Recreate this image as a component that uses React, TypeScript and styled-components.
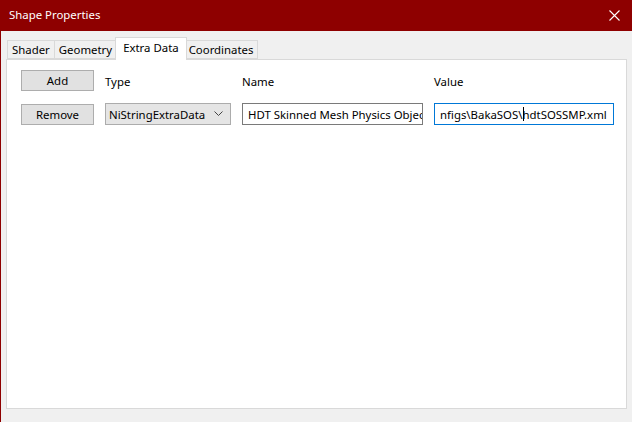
import React from 'react';
import styled, { createGlobalStyle } from 'styled-components';

const GlobalStyle = createGlobalStyle`
  html, body {
    margin: 0;
    padding: 0;
    background: #f0f0f0;
  }
  body {
    font-family: 'Noto Sans', 'Segoe UI', 'Liberation Sans', sans-serif;
    font-size: 11.4px;
    color: #000;
  }
`;

const StWindow = styled.div`
  width: 632px;
  height: 422px;
  box-sizing: border-box;
  border-left: 1px solid #8e0000;
  display: flex;
  flex-direction: column;
  background: #f0f0f0;
  overflow: hidden;
`;

const StTitleBar = styled.div`
  height: 31px;
  flex-shrink: 0;
  background: #8e0000;
  color: #fff;
  display: flex;
  align-items: center;
  justify-content: space-between;
  padding: 0 8px 0 8px;
`;

const StTitle = styled.span`
  line-height: 1;
  margin-top: -1px;
`;

const StCloseButton = styled.div`
  width: 16px;
  height: 16px;
  display: flex;
  align-items: center;
  justify-content: center;
  margin-right: 2px;
`;

const StBody = styled.div`
  flex: 1;
  display: flex;
  flex-direction: column;
  padding: 6px 5px 13px 5px;
`;

const StTabStrip = styled.div`
  display: flex;
  align-items: flex-end;
  height: 22px;
  padding-left: 2px;
  position: relative;
  z-index: 1;
`;

type TabProps = {
  $active?: boolean;
};

const StTab = styled.div<TabProps>`
  box-sizing: border-box;
  height: ${(p) => (p.$active ? '23px' : '19px')};
  padding: ${(p) => (p.$active ? '0 7px 3px 7px' : '0 4px')};
  margin: ${(p) => (p.$active ? '0 -2px -1px -2px' : '0 0 0 -1px')};
  background: ${(p) => (p.$active ? '#fff' : '#f0f0f0')};
  border: 1px solid #d9d9d9;
  border-bottom: ${(p) => (p.$active ? 'none' : '1px solid #d9d9d9')};
  display: flex;
  align-items: center;
  white-space: nowrap;
  position: relative;
  z-index: ${(p) => (p.$active ? 2 : 1)};
`;

const StTabPanel = styled.div`
  flex: 1;
  background: #fff;
  border: 1px solid #d9d9d9;
  padding: 10px 0 0 14px;
`;

const StGrid = styled.div`
  display: grid;
  grid-template-columns: 73px 126px 181px 180px;
  grid-template-rows: 21px 22px;
  column-gap: 11px;
  row-gap: 12px;
  align-items: center;
`;

const StButton = styled.div`
  box-sizing: border-box;
  height: 21px;
  background: #e1e1e1;
  border: 1px solid #adadad;
  display: flex;
  align-items: center;
  justify-content: center;
`;

const StLabel = styled.div`
  padding-top: 1px;
`;

const StCombo = styled.div`
  box-sizing: border-box;
  height: 22px;
  background: #e5e5e5;
  border: 1px solid #acacac;
  display: flex;
  align-items: center;
  justify-content: space-between;
  padding: 0 7px 0 3px;
`;

type FieldProps = {
  $focused?: boolean;
};

const StTextField = styled.div<FieldProps>`
  box-sizing: border-box;
  height: 22px;
  background: #fff;
  border: 1px solid ${(p) => (p.$focused ? '#0078d7' : '#7a7a7a')};
  display: flex;
  align-items: center;
  padding: 0 0 0 5px;
  overflow: hidden;
  white-space: nowrap;
`;

const StCaret = styled.span`
  display: inline-block;
  width: 1px;
  height: 14px;
  background: #000;
  margin: 0 -1px 0 0;
`;

const tabs = ['Shader', 'Geometry', 'Extra Data', 'Coordinates'];

const App = () => {
  return (
    <>
      <GlobalStyle />
      <StWindow>
        <StTitleBar>
          <StTitle>Shape Properties</StTitle>
          <StCloseButton>
            <svg width="11" height="11" viewBox="0 0 11 11">
              <path d="M0.5 0.5 L10.5 10.5 M10.5 0.5 L0.5 10.5" stroke="#fff" strokeWidth="1.1" />
            </svg>
          </StCloseButton>
        </StTitleBar>
        <StBody>
          <StTabStrip>
            {tabs.map((tab) => (
              <StTab key={tab} $active={tab === 'Extra Data'}>
                {tab}
              </StTab>
            ))}
          </StTabStrip>
          <StTabPanel>
            <StGrid>
              <StButton>Add</StButton>
              <StLabel>Type</StLabel>
              <StLabel>Name</StLabel>
              <StLabel>Value</StLabel>

              <StButton>Remove</StButton>
              <StCombo>
                <span>NiStringExtraData</span>
                <svg width="9" height="6" viewBox="0 0 9 6">
                  <path d="M0.5 0.5 L4.5 4.5 L8.5 0.5" stroke="#444" fill="none" strokeWidth="1" />
                </svg>
              </StCombo>
              <StTextField>HDT Skinned Mesh Physics Object</StTextField>
              <StTextField $focused>
                nfigs\BakaSOS\<StCaret />hdtSOSSMP.xml
              </StTextField>
            </StGrid>
          </StTabPanel>
        </StBody>
      </StWindow>
    </>
  );
};

export default App;
